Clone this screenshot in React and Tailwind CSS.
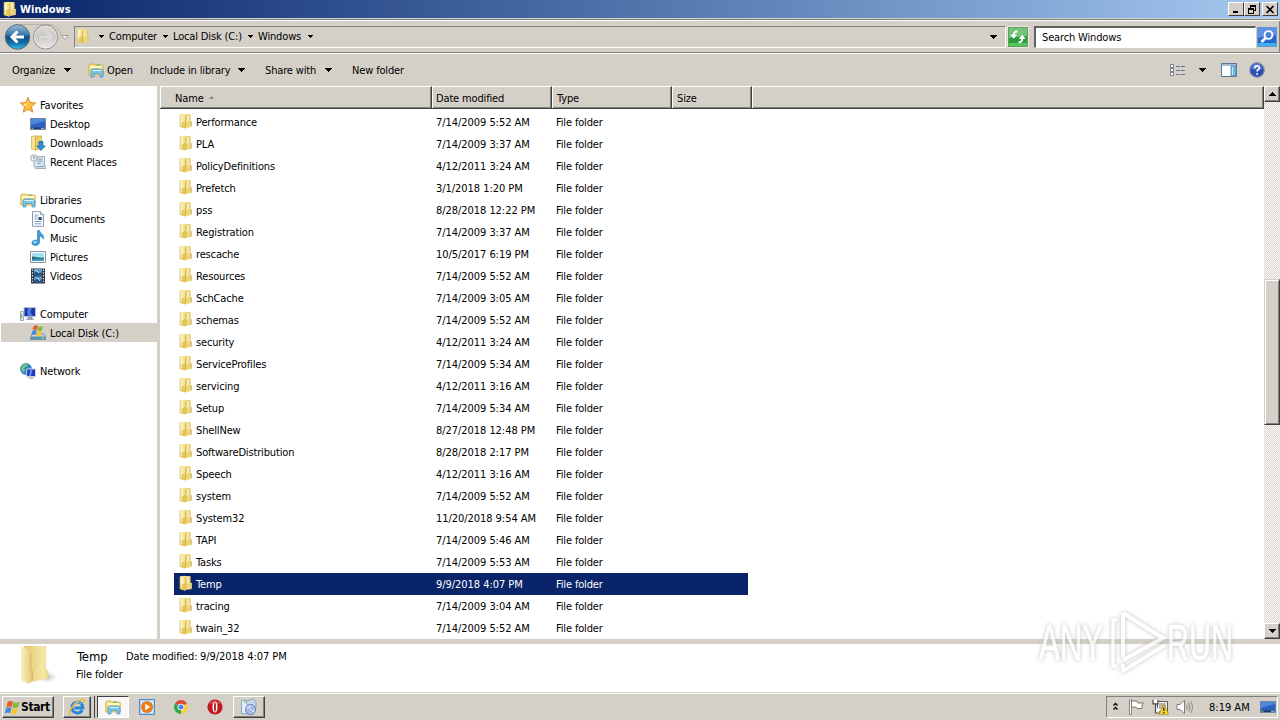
import clsx from "clsx";

const folders = [
  ["Performance", "7/14/2009 5:52 AM"],
  ["PLA", "7/14/2009 3:37 AM"],
  ["PolicyDefinitions", "4/12/2011 3:24 AM"],
  ["Prefetch", "3/1/2018 1:20 PM"],
  ["pss", "8/28/2018 12:22 PM"],
  ["Registration", "7/14/2009 3:37 AM"],
  ["rescache", "10/5/2017 6:19 PM"],
  ["Resources", "7/14/2009 5:52 AM"],
  ["SchCache", "7/14/2009 3:05 AM"],
  ["schemas", "7/14/2009 5:52 AM"],
  ["security", "4/12/2011 3:24 AM"],
  ["ServiceProfiles", "7/14/2009 5:34 AM"],
  ["servicing", "4/12/2011 3:16 AM"],
  ["Setup", "7/14/2009 5:34 AM"],
  ["ShellNew", "8/27/2018 12:48 PM"],
  ["SoftwareDistribution", "8/28/2018 2:17 PM"],
  ["Speech", "4/12/2011 3:16 AM"],
  ["system", "7/14/2009 5:52 AM"],
  ["System32", "11/20/2018 9:54 AM"],
  ["TAPI", "7/14/2009 5:46 AM"],
  ["Tasks", "7/14/2009 5:53 AM"],
  ["Temp", "9/9/2018 4:07 PM"],
  ["tracing", "7/14/2009 3:04 AM"],
  ["twain_32", "7/14/2009 5:52 AM"],
];

/* ---------- icons ---------- */

function Folder({ className }) {
  return (
    <svg width="16" height="16" viewBox="0 0 16 16" className={clsx("shrink-0", className)}>
      <path d="M6 1h6.300v6.500l1.700.7v5.300l-1.500.8L7 15z" fill="#ecd57a" />
      <path d="M2 1.300 6.500.7 8 2v13l-1.300.4L2 14z" fill="#f3e28f" />
      <path d="M2.300 9.500 8 8v7l-1.300.4L2 14z" fill="#e5c95c" />
      <path d="M3.300 2v11M4.800 2v7" stroke="#fcf6cf" strokeWidth="1" />
      <path d="M7.600 2.500v12" stroke="#cfae48" strokeWidth=".8" />
      <path d="M9.300 2v7M10.600 2v6" stroke="#f9efb9" strokeWidth=".9" />
      <path d="M12.300 2v5.500M2 1.500V14" stroke="#d8be66" strokeWidth=".6" />
      <path d="M13 9v3.500" stroke="#bdb698" strokeWidth="1" />
    </svg>
  );
}

function BigFolder() {
  return (
    <svg width="38" height="44" viewBox="0 0 38 44">
      <defs>
        <linearGradient id="bfA" x1="0" x2="1">
          <stop offset="0" stopColor="#faefc2" />
          <stop offset="1" stopColor="#e3c972" />
        </linearGradient>
        <linearGradient id="bfB" x1="0" x2="1">
          <stop offset="0" stopColor="#e2c76c" />
          <stop offset=".8" stopColor="#f7e8a8" />
          <stop offset="1" stopColor="#e8d183" />
        </linearGradient>
        <radialGradient id="bfS">
          <stop offset="0" stopColor="#999" stopOpacity=".7" />
          <stop offset="1" stopColor="#ccc" stopOpacity="0" />
        </radialGradient>
      </defs>
      <ellipse cx="27" cy="33" rx="11" ry="6" fill="url(#bfS)" />
      <path d="M4 2h22v23l2.500 2v7.500L11 38z" fill="url(#bfB)" />
      <path d="M1 1.500 9.500 7l1.500 3v15l1.500 2v9l-3.500 4L1 36z" fill="url(#bfA)" />
      <path d="M10.800 9v16l1.500 2v9" fill="none" stroke="#cfb05a" strokeWidth=".8" />
    </svg>
  );
}

function LibraryFolder() {
  return (
    <svg width="16" height="16" viewBox="0 0 16 16" className="shrink-0">
      <path d="M.7 3.2 2 2h4l1 1h7.500l.8 1v9H.7z" fill="#f4dc79" stroke="#c9a73c" strokeWidth=".7" />
      <path d="M2 4h12v2H2z" fill="#fff7cb" />
      <path d="M8 3h4" stroke="#6abf5c" strokeWidth="1.200" />
      <path d="M3 8.500 4.500 7h8L15 8.500V15h-3v-3.500H6V15H3z" fill="#7cc7ef" stroke="#3f8fc6" strokeWidth=".7" />
      <path d="M4.500 8.500h9" stroke="#dff4ff" />
    </svg>
  );
}

function Star() {
  return (
    <svg width="16" height="16" viewBox="0 0 16 16">
      <path d="m8 .5 2.100 5 5.500.5-4.100 3.600 1.200 5.500L8 12.200 3.300 15.100l1.200-5.500L.4 6l5.500-.5z" fill="#fcc244" stroke="#dc7a1c" strokeWidth=".9" />
      <path d="M8 3 6.500 6.500 3 7l3 2.300z" fill="#ffeb9f" />
    </svg>
  );
}

function DesktopIcon() {
  return (
    <svg width="16" height="16" viewBox="0 0 16 16">
      <path d="M.5 2.500h15v11H.5z" fill="#2d62c4" stroke="#6d86ad" />
      <path d="M1 3h14v2L1 9z" fill="#4f87da" />
      <path d="M1 11.500h14V13H1z" fill="#1f3565" />
      <path d="M1.500 12.300h2" stroke="#8fd478" />
      <path d="M11 12.300h3.500" stroke="#b9c9e4" />
    </svg>
  );
}

function DownloadsIcon() {
  return (
    <svg width="16" height="16" viewBox="0 0 16 16">
      <path d="M1.500 1.500 5.500.7v14.500l-4-1.200z" fill="#f5e392" stroke="#cfae4b" strokeWidth=".7" />
      <path d="M5.500 1h6v12.500l-6 1.500z" fill="#e9cd66" stroke="#c9aa47" strokeWidth=".7" />
      <path d="M9 6.500h4V11h2.300L11 15.400 6.800 11H9z" fill="#2f8fdb" stroke="#125fa5" strokeWidth=".7" />
    </svg>
  );
}

function RecentIcon() {
  return (
    <svg width="16" height="16" viewBox="0 0 16 16">
      <path d="M5 2.500h9.500v9H16v3H5.500L4 13V8z" fill="#d9e5ee" stroke="#8aa0b3" strokeWidth=".8" />
      <path d="M7.500 5h5M7.500 7.200h5M7.500 9.400h3M6 12.700h8" stroke="#6e8eae" strokeWidth=".9" />
      <circle cx="3.800" cy="4" r="3.200" fill="#eef3f7" stroke="#8797a5" strokeWidth=".8" />
      <path d="M3.800 2v2.200h1.600" stroke="#55697c" strokeWidth=".8" fill="none" />
    </svg>
  );
}

function DocIcon() {
  return (
    <svg width="16" height="16" viewBox="0 0 16 16">
      <path d="M2.500.7h8l3 3v11.600h-11z" fill="#fff" stroke="#7c8fa6" strokeWidth=".9" />
      <path d="M10.500.7v3h3" fill="#d9e4ee" stroke="#7c8fa6" strokeWidth=".8" />
      <path d="M4.500 4h4M4.500 6h3M4.500 8h3M4.500 10.500h7M4.500 12.800h7" stroke="#7b9cc4" />
      <path d="M8.500 6h3.200v3H8.500z" fill="#254d82" />
    </svg>
  );
}

function MusicIcon() {
  return (
    <svg width="16" height="16" viewBox="0 0 16 16">
      <path d="M7.500.4h2c.2 3 5.300 4 3.700 8.700-.6-2-2-2.600-3.700-2.900v6c0 4.100-7.600 4.200-7.600.7 0-2.700 3.200-3.500 5.600-2.500z" fill="#3ba0dc" stroke="#1d75b3" strokeWidth=".6" />
      <ellipse cx="5" cy="12.200" rx="1.800" ry="1.100" fill="#a5ddf8" />
    </svg>
  );
}

function PictureIcon() {
  return (
    <svg width="16" height="16" viewBox="0 0 16 16">
      <path d="M.5 2.500h15v11H.5z" fill="#fff" stroke="#8393a1" />
      <path d="M2 4h12v8H2z" fill="#a5ddf2" />
      <path d="M2 7.500c4 0 7 2 12 1V12H2z" fill="#25706e" />
      <path d="M2 10.500c4-1 8 0 12-.7V12H2z" fill="#3b9dc4" />
    </svg>
  );
}

function VideoIcon() {
  return (
    <svg width="16" height="16" viewBox="0 0 16 16">
      <path d="M1 .5h14v15H1z" fill="#29323c" />
      <path d="M4 1h8v6.500H4zM4 8.500h8V15H4z" fill="#5a9bd2" />
      <path d="M4 5c3-3 5 2 8-1v3.500H4zM4 13c3-4 5 1 8-2v4H4z" fill="#27547c" />
      <path d="m6 2 3 3M7 9l3 4" stroke="#b1dbf2" />
      <path d="M2.500 1.500v13M13.500 1.500v13" stroke="#dce6ed" strokeWidth="1.300" strokeDasharray="1.400 1.400" />
    </svg>
  );
}

function ComputerIcon() {
  return (
    <svg width="16" height="16" viewBox="0 0 16 16">
      <path d="M.5 5.500h3v9h-3z" fill="#dbe2e8" stroke="#8494a3" strokeWidth=".8" />
      <path d="M1.300 8v4" stroke="#60b55c" />
      <path d="M4 1.500h11.500v9H4z" fill="#1e35a5" stroke="#b8c1cf" />
      <path d="M8 2h4l-1.500 4 2.500 4H8L7 6z" fill="#4b7be4" />
      <path d="M8 11h4v2H8zM6 13.300h8" fill="#aeb9c5" stroke="#7d8da0" strokeWidth=".8" />
    </svg>
  );
}

function DriveIcon() {
  return (
    <svg width="16" height="16" viewBox="0 0 16 16">
      <path d="m3 9-2.500 2.500v3h15v-3L13.500 9z" fill="#ccd6df" stroke="#6f8190" strokeWidth=".8" />
      <path d="M1 11.500h14.500v3H1z" fill="#5f93ad" />
      <path d="M11.500 13h2.500" stroke="#7df07d" strokeWidth="1.200" />
      <WindowsFlag x={1.5} y={-0.5} s={0.75} />
    </svg>
  );
}

// four waving panes, drawn on a 16 unit square
function WindowsFlag({ x = 0, y = 0, s = 1 }) {
  return (
    <g transform={`translate(${x} ${y}) scale(${s})`}>
      <path d="M3 2c2-1.300 3.700-1 5.500-.2L7.200 7.600C5.400 6.700 3.500 6.700 1.400 7.900z" fill="#ea5a24" />
      <path d="M9.200 2.200c2 1 3.800 1 6.300-.2L14 7.700c-2.200 1.100-4.200 1.100-6.200.1z" fill="#7cb93c" />
      <path d="M1.200 8.700c2-1.200 3.900-1.200 5.700-.3l-1.400 5.600c-1.800-.9-3.700-.9-5.700.3z" fill="#3f8ad8" />
      <path d="M7.600 8.800c2 1 4 1 6.100-.1l-1.400 5.700c-2.100 1.100-4.200 1.100-6.100.1z" fill="#f8c530" />
    </g>
  );
}

function NetworkIcon() {
  return (
    <svg width="16" height="16" viewBox="0 0 16 16">
      <circle cx="6" cy="6" r="5.500" fill="#2f88c9" stroke="#1d689c" strokeWidth=".6" />
      <path d="M2 3c2-2.500 4-2.500 6-1.500L6 4 4 5l1 3-2 1C1 7 .6 5 2 3z" fill="#75c77e" />
      <path d="M6.700 6H15.500v7.500H6.700z" fill="#1c36bb" stroke="#cdd6e3" />
      <path d="M10 6.500h2.500L11 13H9z" fill="#5c8cf0" />
      <path d="M8.500 15h5" stroke="#8091a4" />
    </svg>
  );
}

function Caret({ className }) {
  return (
    <svg width="7" height="4" viewBox="0 0 7 4" shapeRendering="crispEdges" className={clsx("shrink-0", className)}>
      <path d="M0 0h7L3.500 4z" />
    </svg>
  );
}

function SmallCaret() {
  return (
    <svg width="5" height="3" viewBox="0 0 5 3" shapeRendering="crispEdges" className="shrink-0">
      <path d="M0 0h5L2.500 3z" />
    </svg>
  );
}

function NavButtons() {
  return (
    <svg width="68" height="28" viewBox="0 0 68 28" className="shrink-0">
      <defs>
        <linearGradient id="back" x1="0" x2="0" y1="0" y2="1">
          <stop offset="0" stopColor="#9dbdd6" />
          <stop offset=".4" stopColor="#3a7cae" />
          <stop offset=".5" stopColor="#0f4f86" />
          <stop offset=".75" stopColor="#176fa9" />
          <stop offset="1" stopColor="#35bcec" />
        </linearGradient>
        <linearGradient id="fwd" x1="0" x2="0" y1="0" y2="1">
          <stop offset="0" stopColor="#dddbd8" />
          <stop offset=".5" stopColor="#c9c8c6" />
          <stop offset="1" stopColor="#eceae8" />
        </linearGradient>
      </defs>
      <path d="M13 1.500h34c8 0 13 6 13 11" fill="none" stroke="#b6b2aa" />
      <circle cx="16.500" cy="14" r="12.300" fill="url(#back)" stroke="#5c6d7c" />
      <path d="m16.500 8.500-5.500 5.500 5.500 5.500M11.500 14h11.500" stroke="#fff" strokeWidth="3" fill="none" />
      <circle cx="44.500" cy="14" r="12" fill="url(#fwd)" stroke="#8d8b87" />
      <circle cx="44.500" cy="14" r="11" fill="none" stroke="#eeedeb" strokeWidth=".8" />
      <path d="m45 8.500 5.500 5.500-5.500 5.500M39 14h11" stroke="#d9d8d6" strokeWidth="2.600" fill="none" />
      <path d="M60.500 12.500h7l-3.500 4z" fill="#f3f1ec" stroke="#908d86" strokeWidth=".8" />
    </svg>
  );
}

function RefreshIcon() {
  return (
    <svg width="20" height="20" viewBox="0 0 20 20">
      <path d="M0 0h20v20H0z" fill="#2e9b3b" />
      <path d="M1 1h18v8L1 11z" fill="#72c378" />
      <path d="M1 16h18v3H1z" fill="#58c45c" />
      <path d="M.5.500h19v19H.5z" fill="none" stroke="#5d9e62" />
      <path d="M9.500 4.500C6.800 4.300 5.800 5.500 5.800 8" stroke="#fff" strokeWidth="1.800" fill="none" />
      <path d="M2.300 7.500h6.800l-3.400 4.300z" fill="#fff" />
      <path d="M10.500 15.200c2.700.2 3.700-1 3.700-3.200" stroke="#fff" strokeWidth="1.800" fill="none" />
      <path d="M10.800 12h6.800l-3.400-4.300z" fill="#fff" />
    </svg>
  );
}

function SearchIcon() {
  return (
    <svg width="20" height="20" viewBox="0 0 20 20">
      <path d="M0 0h20v20H0z" fill="#2667cf" />
      <path d="M0 0h20v8L0 11z" fill="#5f91e4" />
      <path d="M0 16h20v4H0z" fill="#3fb2ee" />
      <path d="M.5.500h19v19H.5z" fill="none" stroke="#6c94cb" />
      <circle cx="11.500" cy="8" r="3.900" fill="#4880da" stroke="#fff" strokeWidth="1.900" />
      <path d="m8.500 11-4 4" stroke="#fff" strokeWidth="2.600" />
    </svg>
  );
}

function ViewIcon() {
  return (
    <svg width="16" height="12" viewBox="0 0 16 12" shapeRendering="crispEdges">
      {[0, 4, 8].map((y) => (
        <g key={y}>
          <path d={`M.5 ${y + 0.5}h3v3h-3z`} fill="#fff" stroke="#808791" />
          <path d={`M6 ${y + 2.5}h4M11 ${y + 2.5}h4`} stroke="#6b7787" />
        </g>
      ))}
    </svg>
  );
}

function PreviewIcon() {
  return (
    <svg width="16" height="14" viewBox="0 0 16 14">
      <path d="M.5.500h15v13H.5z" fill="#fff" stroke="#57779b" />
      <path d="M1 1h14v2H1z" fill="#a8bdd4" />
      <path d="M10 3h5v10h-5z" fill="#75b9dd" stroke="#4a87ae" strokeWidth=".8" />
      <path d="M11.500 4v8" stroke="#c8eafa" />
    </svg>
  );
}

function HelpIcon() {
  return (
    <svg width="16" height="16" viewBox="0 0 16 16">
      <circle cx="8" cy="8" r="7.300" fill="#2a4fb4" stroke="#8b96ac" strokeWidth="1.200" />
      <path d="M2.500 7a5.500 5.500 0 0 1 11 0c-3 1.500-7 1.500-11 0z" fill="#6f92dd" opacity=".6" />
      <path d="M5.600 6.200C5.700 3 10.500 3.200 10.400 6c0 1.700-2.300 1.700-2.300 3.600M8.100 11v1.800" fill="none" stroke="#fff" strokeWidth="1.700" />
    </svg>
  );
}

function IeIcon() {
  return (
    <svg width="18" height="18" viewBox="0 0 18 18">
      <path d="M14.300 12.300c-2.800 4.700-10.300 3-10.300-2.800 0-7.300 11-7.300 10.800.5H6.500" fill="none" stroke="#2587d8" strokeWidth="2.900" />
      <path d="M5 6.500c2-3 6-3 8-.5" fill="none" stroke="#7cc3f5" />
      <path d="M2.500 16.500C-1 13.500 9 1 15.500 1.500c1.500.2 1.500 2 .6 3.700" fill="none" stroke="#f0bb2e" strokeWidth="1.500" />
    </svg>
  );
}

function PlayerIcon() {
  return (
    <svg width="16" height="16" viewBox="0 0 16 16">
      <path d="M.5.500h15v15H.5z" fill="#a9d3f2" stroke="#4d8cc4" />
      <path d="M2.500 2.500h11v11h-11z" fill="none" stroke="#e3f2fc" />
      <circle cx="8" cy="8" r="5.600" fill="#f07f13" stroke="#c96410" strokeWidth=".6" />
      <path d="M6.300 4.700v6.600l5-3.300z" fill="#fff" />
    </svg>
  );
}

function ChromeIcon() {
  return (
    <svg width="14" height="14" viewBox="0 0 14 14">
      <path d="M7 7 .94 3.500A7 7 0 0 1 13.060 3.500z" fill="#df4a3a" />
      <path d="M7 7 13.060 3.500A7 7 0 0 1 7 14z" fill="#f9cf3d" />
      <path d="M7 7v7A7 7 0 0 1 .94 3.500z" fill="#34a354" />
      <circle cx="7" cy="7" r="3.300" fill="#fff" />
      <circle cx="7" cy="7" r="2.500" fill="#4283e6" />
    </svg>
  );
}

function OperaIcon() {
  return (
    <svg width="16" height="16" viewBox="0 0 16 16">
      <circle cx="8" cy="8" r="7.600" fill="#c4161e" />
      <path d="M2 5a7 7 0 0 1 12 0z" fill="#e05a60" opacity=".7" />
      <ellipse cx="8" cy="8" rx="2.500" ry="5.500" fill="#fff" />
      <ellipse cx="8" cy="8" rx=".9" ry="4.700" fill="#a50f18" />
    </svg>
  );
}

function InstallerIcon() {
  return (
    <svg width="18" height="18" viewBox="0 0 18 18">
      <path d="M1.500 2.500h6l2 2v11h-8z" fill="#e6edf6" stroke="#91a5c6" />
      <path d="M5 3.500 13 1l3 3v5l-6 2z" fill="#c8d8ee" stroke="#8aa0c7" />
      <circle cx="10.500" cy="11.500" r="5" fill="#a9bfe3" stroke="#5f7fbd" />
      <path d="m7 9 7 5M10 7v4" stroke="#f5f9ff" strokeWidth="1.200" />
      <circle cx="10.500" cy="11.500" r="1.500" fill="#fff" stroke="#7390c2" />
      <path d="M4 1.500h3v3H4z" fill="#9ac48c" />
    </svg>
  );
}

function FlagIcon() {
  return (
    <svg width="16" height="16" viewBox="0 0 16 16">
      <path d="M1.500 1h2v14.500h-2z" fill="#fff" stroke="#6f6c66" strokeWidth=".8" />
      <path d="M3.500 2h5.500l1 2h5.500l-1.500 2.500v3H9l-1-1.500H3.500z" fill="#fff" stroke="#6f6c66" strokeWidth=".9" />
    </svg>
  );
}

function TrayNetwork() {
  return (
    <svg width="17" height="16" viewBox="0 0 17 16">
      <path d="M5.500 2.500h10v10h-10z" fill="#f4f2ee" stroke="#5f5c57" />
      <path d="M7 4h7v6H7z" fill="#b9b6b0" />
      <path d="M1 .8v4h5v-4M3.500 5v9H8" fill="#fff" stroke="#4d4b47" strokeWidth="1.200" />
      <path d="m11.800 5.500 4.900 9.700H7z" fill="#f9d62b" stroke="#ad8d16" strokeWidth=".8" />
      <path d="M11.800 8.500v3.500M11.800 13v1.200" stroke="#222" strokeWidth="1.300" />
    </svg>
  );
}

function SpeakerIcon() {
  return (
    <svg width="17" height="16" viewBox="0 0 17 16">
      <path d="M1 5.500h3L8.500 1.200v13.600L4 10.500H1z" fill="#fff" stroke="#77746e" strokeWidth=".9" />
      <path d="M10.500 5.500q1.700 2.500 0 5M12.500 3.700q3 4.300 0 8.600M14.500 2q4 6 0 12" fill="none" stroke="#85827b" strokeWidth=".9" />
    </svg>
  );
}

/* ---------- window parts ---------- */

function CaptionButton({ children, className }) {
  return (
    <button
      className={clsx(
        "flex h-[14px] w-4 items-center justify-center border border-t-white border-l-white border-r-[#404040] border-b-[#404040] bg-[#d4d0c8]",
        className
      )}
    >
      <svg width="10" height="9" viewBox="0 0 10 9" fill="none" stroke="#000" shapeRendering="crispEdges">
        {children}
      </svg>
    </button>
  );
}

function TitleBar() {
  return (
    <header className="flex h-[18px] items-center bg-linear-to-r from-[#0a246a] to-[#a6caf0] pr-[2px] pl-[2px]">
      <Folder />
      <span className="ml-[2px] flex-1 text-[11px] font-bold tracking-[0.05px] text-white">Windows</span>
      <CaptionButton>
        <path d="M2 7h5" strokeWidth="2" />
      </CaptionButton>
      <CaptionButton>
        <path d="M3 0h6v2H3zM1 3h6v2H1z" fill="#000" stroke="none" />
        <path d="M3.500 1v2M8.500 1v4.500M7 5.500h2M1.500 4v4.500h5V4" />
      </CaptionButton>
      <CaptionButton className="ml-[2px]">
        <path d="m1.500 1 7 7M8.500 1l-7 7" strokeWidth="1.600" shapeRendering="auto" />
      </CaptionButton>
    </header>
  );
}

function AddressBar() {
  return (
    <div className="mt-px flex h-[35px] items-center border-t border-b border-t-[#808080] border-b-white pl-px shadow-[inset_0_1px_0_#fff,inset_-1px_0_0_#808080,inset_0_-1px_0_#808080]">
      <NavButtons />
      <div className="ml-[5px] flex h-[22px] w-[932px] items-center border border-t-[#808080] border-r-white border-b-white border-l-[#808080]">
        <Folder className="mb-px" />
        <span className="ml-2 flex items-center gap-[5px]">
          <SmallCaret />
          <span className="w-[49px]">Computer</span>
          <SmallCaret />
          <span className="w-[70px]">Local Disk (C:)</span>
          <SmallCaret />
          <span className="w-[45px]">Windows</span>
          <SmallCaret />
        </span>
        <Caret className="mr-2 ml-auto" />
      </div>
      <div className="ml-px flex h-[22px] w-[22px] items-center justify-center border border-[#ebe8e2]">
        <RefreshIcon />
      </div>
      <div className="ml-[5px] flex h-[22px] w-[222px] items-center border-t-2 border-r border-b border-l-2 border-t-[#606060] border-r-white border-b-white border-l-[#606060] bg-white pl-[6px]">
        Search Windows
      </div>
      <div className="ml-px">
        <SearchIcon />
      </div>
    </div>
  );
}

function Toolbar() {
  return (
    <div className="flex h-[31px] items-center pl-3">
      <span className="w-[52px] pt-px">Organize</span>
      <Caret />
      <span className="ml-[17px]">
        <LibraryFolder />
      </span>
      <span className="ml-[3px] w-[43px] pt-px">Open</span>
      <span className="w-[88px] pt-px">Include in library</span>
      <Caret />
      <span className="ml-5 w-[60px] pt-px">Share with</span>
      <Caret />
      <span className="ml-5 flex-1 pt-px">New folder</span>
      <ViewIcon />
      <Caret className="ml-[13px]" />
      <span className="ml-[15px]">
        <PreviewIcon />
      </span>
      <span className="mr-[15px] ml-3">
        <HelpIcon />
      </span>
    </div>
  );
}

function NavGroup({ icon: Icon, label, items = [] }) {
  return (
    <div className="mb-[19px]">
      <div className="flex h-[19px] items-center gap-1 pl-5">
        <Icon />
        <span className="pt-[2px]">{label}</span>
      </div>
      {items.map(([ItemIcon, text, active]) => (
        <div key={text} className={clsx("ml-px flex h-[19px] items-center gap-1 pl-[29px]", active && "bg-[#d4d0c8]")}>
          <ItemIcon />
          <span className="pt-[2px]">{text}</span>
        </div>
      ))}
    </div>
  );
}

function NavPane() {
  return (
    <nav className="w-[157px] shrink-0 bg-white pt-[9px]">
      <NavGroup
        icon={Star}
        label="Favorites"
        items={[
          [DesktopIcon, "Desktop"],
          [DownloadsIcon, "Downloads"],
          [RecentIcon, "Recent Places"],
        ]}
      />
      <NavGroup
        icon={LibraryFolder}
        label="Libraries"
        items={[
          [DocIcon, "Documents"],
          [MusicIcon, "Music"],
          [PictureIcon, "Pictures"],
          [VideoIcon, "Videos"],
        ]}
      />
      <NavGroup icon={ComputerIcon} label="Computer" items={[[DriveIcon, "Local Disk (C:)", true]]} />
      <NavGroup icon={NetworkIcon} label="Network" />
    </nav>
  );
}

function HeaderCell({ className, children }) {
  return (
    <div
      className={clsx(
        "flex h-[23px] items-center border-t border-r border-b border-t-white border-r-[#404040] border-b-[#404040] pt-px shadow-[inset_1px_0_0_#fff,inset_-1px_-1px_0_#808080]",
        className
      )}
    >
      {children}
    </div>
  );
}

function FileList() {
  return (
    <main className="min-w-0 flex-1 bg-white">
      <div className="flex bg-[#d4d0c8]">
        <HeaderCell className="w-[272px] pl-[15px]">
          Name
          <svg width="5" height="3" viewBox="0 0 5 3" className="mb-[2px] ml-[5px]">
            <path d="M0 3h5L2.500 0z" fill="#87837b" />
          </svg>
        </HeaderCell>
        <HeaderCell className="w-[120px] pl-1">Date modified</HeaderCell>
        <HeaderCell className="w-[120px] pl-[5px]">Type</HeaderCell>
        <HeaderCell className="w-20 pl-[5px]">Size</HeaderCell>
        <HeaderCell className="flex-1" />
      </div>
      <div className="pt-[2px] pl-[14px]">
        {folders.map(([name, date]) => (
          <div
            key={name}
            className={clsx("flex h-[22px] w-[574px] items-center pl-1", name === "Temp" && "bg-[#0a246a] text-white")}
          >
            <Folder className="mb-[2px]" />
            <span className="ml-[2px] w-60">{name}</span>
            <span className="w-[120px] tracking-[-0.05px]">{date}</span>
            <span>File folder</span>
          </div>
        ))}
      </div>
    </main>
  );
}

function ScrollBar() {
  const button =
    "flex h-4 w-4 shrink-0 items-center justify-center border border-t-white border-l-white border-r-[#404040] border-b-[#404040] bg-[#d4d0c8] shadow-[inset_-1px_-1px_0_#808080]";
  return (
    <div className="flex w-4 shrink-0 flex-col bg-white bg-[repeating-conic-gradient(#d4d0c8_0_25%,#fff_0_50%)] bg-size-[2px_2px]">
      <div className={button}>
        <Caret className="rotate-180" />
      </div>
      <div className="mt-[177px] h-[146px] border border-t-[#d4d0c8] border-r-[#404040] border-b-[#404040] border-l-[#d4d0c8] bg-[#d4d0c8] shadow-[inset_1px_1px_0_#fff,inset_-1px_-1px_0_#808080]" />
      <div className={clsx(button, "mt-auto")}>
        <Caret />
      </div>
    </div>
  );
}

function DetailsPane() {
  return (
    <section className="flex h-[48px] bg-white pl-5">
      <BigFolder />
      <div className="ml-[18px] pt-[6px] leading-[14px]">
        <div className="flex">
          <span className="w-[50px] pl-px text-[13px] tracking-[-0.1px]">Temp</span>
          <span className="w-[74px]">Date modified:</span>
          <span className="tracking-[-0.05px]">9/9/2018 4:07 PM</span>
        </div>
        <div className="mt-1">File folder</div>
      </div>
    </section>
  );
}

const raised =
  "border border-t-white border-l-white border-r-[#404040] border-b-[#404040] shadow-[inset_-1px_-1px_0_#808080]";

function Taskbar() {
  return (
    <footer className="mt-px flex h-[27px] items-center border-t border-white pl-[2px]">
      <button className={clsx("flex h-[22px] w-[52px] items-center pl-px text-[12px] font-bold tracking-[-0.4px]", raised)}>
        <svg width="17" height="17" viewBox="-1 0 18 16" className="shrink-0">
          <WindowsFlag />
        </svg>
        Start
      </button>
      <div className={clsx("ml-[9px] flex h-[22px] w-7 items-center justify-center", raised)}>
        <IeIcon />
      </div>
      <div className="h-[22px] w-1 border-r border-[#404040]" />
      <div className="ml-[2px] flex h-[22px] w-8 items-center justify-center border border-t-[#404040] border-r-white border-b-white border-l-[#404040] bg-[#f8f7f5]">
        <LibraryFolder />
      </div>
      <div className="ml-[10px]">
        <PlayerIcon />
      </div>
      <div className="ml-[19px]">
        <ChromeIcon />
      </div>
      <div className="ml-[19px]">
        <OperaIcon />
      </div>
      <div className={clsx("ml-[10px] flex h-[22px] w-8 items-center justify-center", raised)}>
        <InstallerIcon />
      </div>
      <div className="mr-[2px] ml-auto flex h-[22px] w-[172px] items-center border border-t-[#808080] border-r-white border-b-white border-l-[#808080] pl-[6px]">
        <svg width="5" height="9" viewBox="0 0 5 9" fill="none" stroke="#000" strokeWidth="1.300" className="mb-px">
          <path d="M.5 3.500 2.500 1.500l2 2M.5 7.500l2-2 2 2" />
        </svg>
        <span className="ml-[10px]">
          <FlagIcon />
        </span>
        <span className="ml-2">
          <TrayNetwork />
        </span>
        <span className="ml-[7px]">
          <SpeakerIcon />
        </span>
        <span className="ml-4 w-[51px] tracking-[0px]">8:19 AM</span>
        <DesktopIcon />
      </div>
    </footer>
  );
}

function Watermark() {
  return (
    <svg
      width="216"
      height="84"
      viewBox="0 0 216 84"
      className="pointer-events-none absolute top-[601px] left-[1030px] opacity-75 drop-shadow-[0_0_2px_#aaaaaa]"
    >
      <g
        fill="#fff"
        stroke="#fff"
        strokeWidth=".6"
        fontFamily="'Liberation Sans Narrow', 'Liberation Sans', sans-serif"
        fontSize="50"
      >
        <text x="9" y="59" textLength="64" lengthAdjust="spacingAndGlyphs">
          ANY
        </text>
        <text x="137" y="59" textLength="66" lengthAdjust="spacingAndGlyphs">
          RUN
        </text>
      </g>
      <g fill="none" stroke="#fff" strokeWidth="4">
        <path d="M93 12v44M93 12l40 25-40 22" />
        <path d="M87 19h-4v46h4M93 63v7l42-26" strokeWidth="3.500" />
      </g>
    </svg>
  );
}

export default function App() {
  return (
    <div className="relative flex h-screen w-full flex-col overflow-hidden bg-[#d4d0c8] font-['DejaVu_Sans_Condensed','DejaVu_Sans',sans-serif] text-[11px] leading-none font-stretch-condensed tracking-[-0.15px] whitespace-nowrap text-black">
      <TitleBar />
      <AddressBar />
      <Toolbar />
      <div className="mt-px flex h-[553px]">
        <NavPane />
        <div className="w-[3px] shrink-0" />
        <FileList />
        <ScrollBar />
      </div>
      <div className="h-[5px]" />
      <DetailsPane />
      <Taskbar />
      <Watermark />
    </div>
  );
}
